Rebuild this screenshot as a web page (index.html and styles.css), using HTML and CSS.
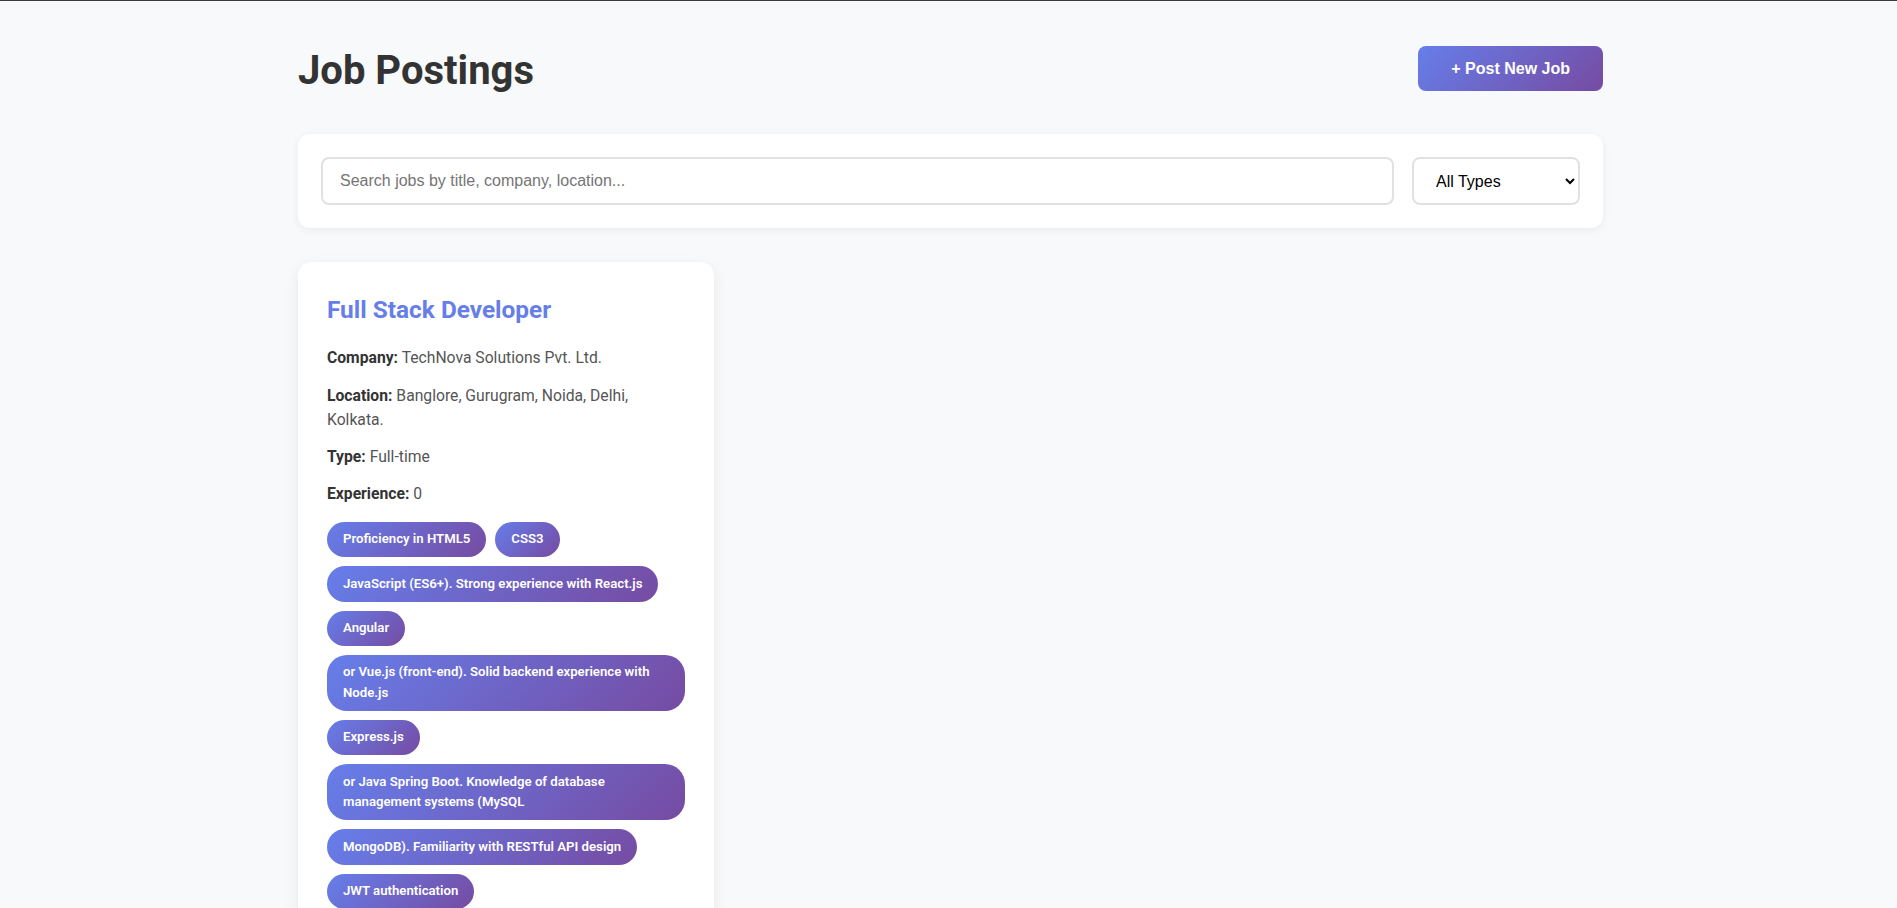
FILE: index.html
```html
<!DOCTYPE html>
<html lang="en">
<head>
<meta charset="utf-8">
<title>Job Postings</title>
<link rel="stylesheet" href="styles.css">
</head>
<body>
<div class="container">
  <header class="page-header">
    <h1 class="page-title">Job Postings</h1>
    <button class="btn-primary" type="button">+ Post New Job</button>
  </header>

  <section class="filters">
    <input class="search-input" type="text" placeholder="Search jobs by title, company, location...">
    <select class="type-select">
      <option>All Types</option>
      <option>Full-time</option>
      <option>Part-time</option>
      <option>Contract</option>
      <option>Internship</option>
    </select>
  </section>

  <div class="job-grid">
    <article class="job-card">
      <h3 class="job-title">Full Stack Developer</h3>
      <p class="job-meta"><strong class="meta-label">Company:</strong> <span class="meta-value">TechNova Solutions Pvt. Ltd.</span></p>
      <p class="job-meta"><strong class="meta-label">Location:</strong> <span class="meta-value">Banglore, Gurugram, Noida, Delhi, Kolkata.</span></p>
      <p class="job-meta"><strong class="meta-label">Type:</strong> <span class="meta-value">Full-time</span></p>
      <p class="job-meta"><strong class="meta-label">Experience:</strong> <span class="meta-value">0</span></p>
      <div class="skills">
        <span class="skill-tag">Proficiency in HTML5</span>
        <span class="skill-tag">CSS3</span>
        <span class="skill-tag">JavaScript (ES6+). Strong experience with React.js</span>
        <span class="skill-tag">Angular</span>
        <span class="skill-tag">or Vue.js (front-end). Solid backend experience with Node.js</span>
        <span class="skill-tag">Express.js</span>
        <span class="skill-tag">or Java Spring Boot. Knowledge of database management systems (MySQL</span>
        <span class="skill-tag">MongoDB). Familiarity with RESTful API design</span>
        <span class="skill-tag">JWT authentication</span>
      </div>
    </article>
  </div>
</div>
</body>
</html>
```
FILE: styles.css
```css
* {
  box-sizing: border-box;
}

html {
  border-top: 1px solid #3f3b42;
}

body {
  margin: 0;
  background: #f8f9fa;
  font-family: Roboto, "Noto Sans", sans-serif;
  color: #333;
  line-height: 1.6;
}

.container {
  max-width: 1309px;
  margin: 0 auto;
  padding: 45px 0 40px 4px;
}

.page-header {
  display: flex;
  justify-content: space-between;
  align-items: flex-start;
  margin-bottom: 40px;
}

.page-title {
  margin: 1px 0 0;
  font-size: 40px;
  font-weight: 700;
  line-height: normal;
  color: #333;
}

.btn-primary {
  height: 45px;
  padding: 0 33px;
  border: none;
  border-radius: 8px;
  background: linear-gradient(135deg, #667eea 0%, #764ba2 100%);
  color: #fff;
  font-family: "Liberation Sans", Arial, sans-serif;
  font-size: 16px;
  font-weight: 700;
  cursor: pointer;
}

.filters {
  display: flex;
  gap: 18px;
  padding: 23px;
  margin-bottom: 34px;
  background: #fff;
  border-radius: 12px;
  box-shadow: 0 2px 10px rgba(0, 0, 0, 0.06);
}

.search-input {
  flex: 1;
  height: 48px;
  padding: 0 17px;
  border: 2px solid #e1e1e1;
  border-radius: 8px;
  font-family: "Liberation Sans", Arial, sans-serif;
  font-size: 16px;
  color: #333;
  background: #fff;
  outline: none;
}

.search-input::placeholder {
  color: #757575;
}

.type-select {
  width: 168px;
  height: 48px;
  padding: 0 12px 0 18px;
  border: 2px solid #e1e1e1;
  border-radius: 8px;
  font-family: "Liberation Sans", Arial, sans-serif;
  font-size: 16px;
  color: #000;
  background: #fff;
}

.job-grid {
  display: grid;
  grid-template-columns: repeat(auto-fill, minmax(400px, 1fr));
  gap: 28px;
}

.job-card {
  padding: 29px;
  background: #fff;
  border-radius: 14px;
  box-shadow: 0 4px 15px rgba(0, 0, 0, 0.07);
}

.job-title {
  margin: 0 0 17px;
  font-size: 24.4px;
  font-weight: 700;
  line-height: 38.4px;
  color: #667eea;
}

.job-meta {
  margin: 0 0 12.8px;
  font-size: 15.7px;
  line-height: 24.3px;
  color: #555;
}

.meta-label {
  color: #333;
}

.meta-value {
  color: #555;
}

.skills {
  display: flex;
  flex-wrap: wrap;
  gap: 9px;
  margin-top: 15.5px;
}

.skill-tag {
  padding: 7.4px 16px;
  border-radius: 20px;
  background: linear-gradient(135deg, #667eea 0%, #764ba2 100%);
  color: #fff;
  font-size: 13.2px;
  font-weight: 600;
  line-height: 20.6px;
}
```
